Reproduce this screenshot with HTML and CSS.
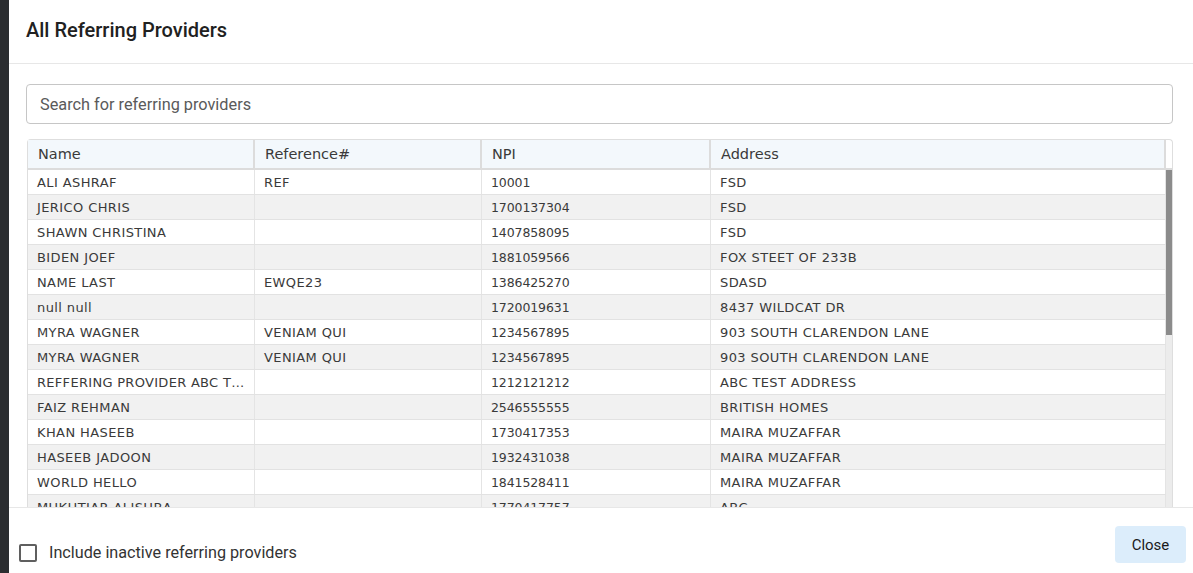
FILE: index.html
```html
<!DOCTYPE html>
<html lang="en">
<head>
<meta charset="utf-8">
<title>All Referring Providers</title>
<link rel="stylesheet" href="styles.css">
</head>
<body>
<div class="dialog">
  <div class="dialog-header">
    <h1 class="dialog-title">All Referring Providers</h1>
  </div>
  <div class="dialog-content">
    <input class="search" type="text" placeholder="Search for referring providers">
    <div class="grid">
      <div class="grid-head">
        <div class="hcell c1">Name</div>
        <div class="hcell c2">Reference#</div>
        <div class="hcell c3">NPI</div>
        <div class="hcell c4">Address</div>
        <div class="hcell-gap"></div>
      </div>
      <div class="grid-body">
        <div class="rows">
          <div class="row"><div class="cell c1">ALI ASHRAF</div><div class="cell c2">REF</div><div class="cell c3 num">10001</div><div class="cell c4">FSD</div></div>
          <div class="row alt"><div class="cell c1">JERICO CHRIS</div><div class="cell c2"></div><div class="cell c3 num">1700137304</div><div class="cell c4">FSD</div></div>
          <div class="row"><div class="cell c1">SHAWN CHRISTINA</div><div class="cell c2"></div><div class="cell c3 num">1407858095</div><div class="cell c4">FSD</div></div>
          <div class="row alt"><div class="cell c1">BIDEN JOEF</div><div class="cell c2"></div><div class="cell c3 num">1881059566</div><div class="cell c4">FOX STEET OF 233B</div></div>
          <div class="row"><div class="cell c1">NAME LAST</div><div class="cell c2">EWQE23</div><div class="cell c3 num">1386425270</div><div class="cell c4">SDASD</div></div>
          <div class="row alt"><div class="cell c1">null null</div><div class="cell c2"></div><div class="cell c3 num">1720019631</div><div class="cell c4">8437 WILDCAT DR</div></div>
          <div class="row"><div class="cell c1">MYRA WAGNER</div><div class="cell c2">VENIAM QUI</div><div class="cell c3 num">1234567895</div><div class="cell c4">903 SOUTH CLARENDON LANE</div></div>
          <div class="row alt"><div class="cell c1">MYRA WAGNER</div><div class="cell c2">VENIAM QUI</div><div class="cell c3 num">1234567895</div><div class="cell c4">903 SOUTH CLARENDON LANE</div></div>
          <div class="row"><div class="cell c1 tight">REFFERING PROVIDER ABC TEST</div><div class="cell c2"></div><div class="cell c3 num">1212121212</div><div class="cell c4">ABC TEST ADDRESS</div></div>
          <div class="row alt"><div class="cell c1">FAIZ REHMAN</div><div class="cell c2"></div><div class="cell c3 num">2546555555</div><div class="cell c4">BRITISH HOMES</div></div>
          <div class="row"><div class="cell c1">KHAN HASEEB</div><div class="cell c2"></div><div class="cell c3 num">1730417353</div><div class="cell c4">MAIRA MUZAFFAR</div></div>
          <div class="row alt"><div class="cell c1">HASEEB JADOON</div><div class="cell c2"></div><div class="cell c3 num">1932431038</div><div class="cell c4">MAIRA MUZAFFAR</div></div>
          <div class="row"><div class="cell c1">WORLD HELLO</div><div class="cell c2"></div><div class="cell c3 num">1841528411</div><div class="cell c4">MAIRA MUZAFFAR</div></div>
          <div class="row alt"><div class="cell c1">MUKHTIAR ALISHBA</div><div class="cell c2"></div><div class="cell c3 num">1770417757</div><div class="cell c4">ABC</div></div>
          <div class="row"><div class="cell c1">JOHN SMITH</div><div class="cell c2"></div><div class="cell c3 num">1538492016</div><div class="cell c4">MAIN STREET</div></div>
        </div>
        <div class="scroll-track"><div class="scroll-thumb"></div></div>
      </div>
    </div>
  </div>
  <div class="dialog-footer">
    <label class="check">
      <span class="check-box"></span>
      <span class="check-label">Include inactive referring providers</span>
    </label>
    <button class="btn-close" type="button">Close</button>
  </div>
</div>
</body>
</html>
```

FILE: styles.css
```css
* { box-sizing: border-box; }
html, body { margin: 0; padding: 0; height: 100%; }
body {
  background: #2b2d30;
  font-family: Roboto, "Liberation Sans", sans-serif;
  overflow: hidden;
}
.dialog {
  margin-left: 9px;
  height: 573px;
  background: #fff;
  display: flex;
  flex-direction: column;
}
.dialog-header {
  padding: 18px 18px 21px 17px;
  border-bottom: 1px solid #e7e7e7;
}
.dialog-title {
  margin: 0;
  font-size: 20px;
  line-height: 24px;
  font-weight: 500;
  color: #212121;
}
.dialog-content {
  flex: 1;
  min-height: 0;
  overflow: hidden;
  padding: 20px 20px 0 17px;
  display: flex;
  flex-direction: column;
  gap: 15px;
}
.search {
  display: block;
  width: 100%;
  height: 40px;
  border: 1px solid #c6c6c6;
  border-radius: 4px;
  padding: 0 13px;
  font-family: Roboto, "Liberation Sans", sans-serif;
  font-size: 16.3px;
  color: #333;
  outline: none;
  flex-shrink: 0;
}
.search::placeholder { color: #5a5a5a; }
.grid {
  margin-left: 1px;
  border: 1px solid #dedede;
  border-bottom: none;
  border-radius: 4px 4px 0 0;
  font-family: "DejaVu Sans", sans-serif;
  color: #3a3a3a;
  flex-shrink: 0;
}
.grid-head {
  display: flex;
  height: 30px;
  border-bottom: 2px solid #dcdcdc;
}
.hcell {
  background: #f3f8fc;
  font-size: 14.5px;
  line-height: 28px;
  padding-left: 10px;
  border-right: 2px solid #dcdcdc;
  color: #3a3a3a;
}
.hcell-gap { width: 6px; flex-shrink: 0; }
.c1 { width: 227px; flex-shrink: 0; }
.c2 { width: 227px; flex-shrink: 0; }
.c3 { width: 229px; flex-shrink: 0; }
.c4 { flex: 1; min-width: 0; }
.grid-body {
  display: flex;
  height: 400px;
}
.rows { flex: 1; min-width: 0; }
.row {
  display: flex;
  height: 25px;
  border-bottom: 1px solid #e2e2e2;
  background: #fff;
}
.row.alt { background: #f1f1f1; }
.cell {
  font-size: 13px;
  letter-spacing: 0.4px;
  line-height: 25px;
  padding-left: 9px;
  padding-right: 10px;
  border-right: 1px solid #e4e4e4;
  white-space: nowrap;
  overflow: hidden;
  text-overflow: ellipsis;
}
.cell.num {
  font-size: 12.5px;
  letter-spacing: -0.1px;
}
.cell.tight { padding-right: 6px; letter-spacing: 0.3px; }
.scroll-track {
  width: 6px;
  flex-shrink: 0;
  background: #ececec;
}
.scroll-thumb {
  height: 165px;
  background: #8b8b8b;
}
.dialog-footer {
  flex-shrink: 0;
  height: 66px;
  border-top: 1px solid #e7e7e7;
  display: flex;
  justify-content: space-between;
  align-items: flex-start;
  padding: 18px 7px 0 10px;
}
.check {
  display: flex;
  align-items: center;
  gap: 12px;
  margin-top: 18px;
}
.check-box {
  width: 18px;
  height: 18px;
  border: 2px solid #5f5f5f;
  border-radius: 2px;
  flex-shrink: 0;
}
.check-label {
  font-size: 16.2px;
  line-height: 18px;
  color: #333;
}
.btn-close {
  width: 71px;
  height: 37px;
  border: none;
  border-radius: 4px;
  background: #dcedfb;
  font-family: Roboto, "Liberation Sans", sans-serif;
  font-size: 15px;
  font-weight: 400;
  color: #1a1a1a;
  padding: 0;
}
```
